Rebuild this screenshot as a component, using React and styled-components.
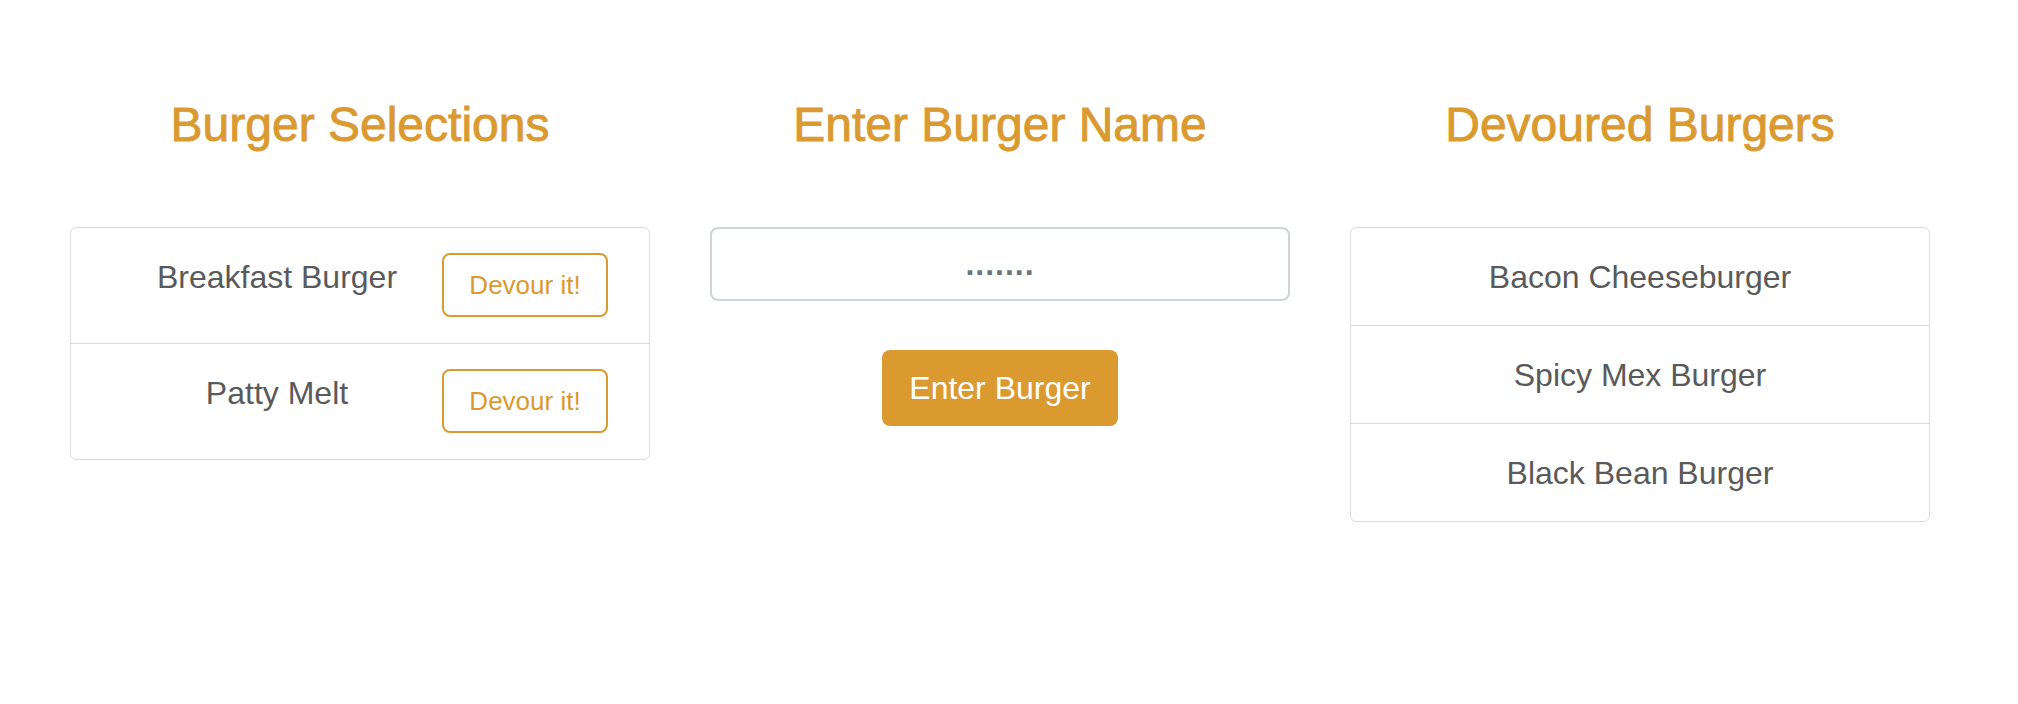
import React from "react";
import styled, { createGlobalStyle } from "styled-components";

const GlobalStyle = createGlobalStyle`
    body {
        margin: 0;
        background: #fff;
        font-family: "Liberation Sans", Arial, sans-serif;
    }
`;

const accent = "#da9a30";

const Page = styled.div`
    display: grid;
    grid-template-columns: repeat(3, 580px);
    column-gap: 60px;
    padding: 96px 0 0 70px;
`;

const Column = styled.section`
    display: flex;
    flex-direction: column;
    align-items: center;
`;

// medium weight isn't shipped with Liberation Sans, a thin stroke gets close
const Title = styled.h2`
    margin: 0 0 73px;
    font-size: 48px;
    line-height: 58px;
    font-weight: 400;
    -webkit-text-stroke: 0.9px ${accent};
    color: ${accent};
    text-align: center;
`;

const Card = styled.ul`
    align-self: stretch;
    margin: 0;
    padding: 0;
    list-style: none;
    border: 1px solid #dcdcdc;
    border-radius: 6px;
`;

const Row = styled.li`
    display: flex;
    align-items: flex-start;
    padding: ${p => (p.$withAction ? "25px 41px 26px" : "25px 25px 24px")};
    font-size: 32px;
    line-height: 48px;
    color: #5a5a5a;

    & + & {
        border-top: 1px solid #dcdcdc;
    }
`;

const Name = styled.span`
    flex: 1;
    text-align: center;
`;

const DevourButton = styled.button`
    width: 166px;
    height: 64px;
    padding: 0;
    background: #fff;
    border: 2px solid ${accent};
    border-radius: 8px;
    color: ${accent};
    font-family: inherit;
    font-size: 26px;
    cursor: pointer;
`;

const NameInput = styled.input`
    box-sizing: border-box;
    width: 100%;
    height: 74px;
    padding: 0 20px;
    border: 2px solid #ced4da;
    border-radius: 8px;
    font-family: inherit;
    font-size: 32px;
    text-align: center;
    color: #495057;

    &::placeholder {
        color: #6c757d;
        letter-spacing: 1px;
        font-weight: 700;
    }
`;

const SubmitButton = styled.button`
    margin-top: 49px;
    width: 236px;
    height: 76px;
    padding: 0;
    border: none;
    border-radius: 8px;
    background: ${accent};
    color: #fff;
    font-family: inherit;
    font-size: 32px;
    cursor: pointer;
`;

const available = ["Breakfast Burger", "Patty Melt"];
const devoured = ["Bacon Cheeseburger", "Spicy Mex Burger", "Black Bean Burger"];

export default function App() {
    return (
        <>
            <GlobalStyle />
            <Page>
                <Column>
                    <Title>Burger Selections</Title>
                    <Card>
                        {available.map(name => (
                            <Row key={name} $withAction>
                                <Name>{name}</Name>
                                <DevourButton>Devour it!</DevourButton>
                            </Row>
                        ))}
                    </Card>
                </Column>

                <Column>
                    <Title>Enter Burger Name</Title>
                    <NameInput type="text" placeholder="......." />
                    <SubmitButton>Enter Burger</SubmitButton>
                </Column>

                <Column>
                    <Title>Devoured Burgers</Title>
                    <Card>
                        {devoured.map(name => (
                            <Row key={name}>
                                <Name>{name}</Name>
                            </Row>
                        ))}
                    </Card>
                </Column>
            </Page>
        </>
    );
}
